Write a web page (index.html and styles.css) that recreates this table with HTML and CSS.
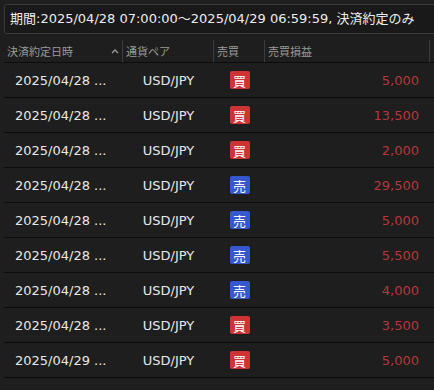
FILE: index.html
```html
<!DOCTYPE html>
<html lang="ja">
<head>
<meta charset="utf-8">
<link rel="stylesheet" href="styles.css">
</head>
<body>
<div class="page">
  <div class="filter">期間:2025/04/28 07:00:00～2025/04/29 06:59:59, 決済約定のみ</div>
  <div class="table">
    <div class="head">
      <div class="hcell">決済約定日時<svg class="sort" width="8" height="6" viewBox="0 0 8 6"><path d="M1 5 L4 2 L7 5" fill="none" stroke="#9a9a9a" stroke-width="1.3"/></svg></div>
      <div class="hcell">通貨ペア</div>
      <div class="hcell">売買</div>
      <div class="hcell">売買損益</div>
      <div class="hfill"></div>
    </div>
    <div class="row"><div class="c date">2025/04/28 ...</div><div class="c pair">USD/JPY</div><div class="c side"><span class="badge buy">買</span></div><div class="c pl">5,000</div></div>
    <div class="row"><div class="c date">2025/04/28 ...</div><div class="c pair">USD/JPY</div><div class="c side"><span class="badge buy">買</span></div><div class="c pl">13,500</div></div>
    <div class="row"><div class="c date">2025/04/28 ...</div><div class="c pair">USD/JPY</div><div class="c side"><span class="badge buy">買</span></div><div class="c pl">2,000</div></div>
    <div class="row"><div class="c date">2025/04/28 ...</div><div class="c pair">USD/JPY</div><div class="c side"><span class="badge sell">売</span></div><div class="c pl">29,500</div></div>
    <div class="row"><div class="c date">2025/04/28 ...</div><div class="c pair">USD/JPY</div><div class="c side"><span class="badge sell">売</span></div><div class="c pl">5,000</div></div>
    <div class="row"><div class="c date">2025/04/28 ...</div><div class="c pair">USD/JPY</div><div class="c side"><span class="badge sell">売</span></div><div class="c pl">5,500</div></div>
    <div class="row"><div class="c date">2025/04/28 ...</div><div class="c pair">USD/JPY</div><div class="c side"><span class="badge sell">売</span></div><div class="c pl">4,000</div></div>
    <div class="row"><div class="c date">2025/04/28 ...</div><div class="c pair">USD/JPY</div><div class="c side"><span class="badge buy">買</span></div><div class="c pl">3,500</div></div>
    <div class="row"><div class="c date">2025/04/29 ...</div><div class="c pair">USD/JPY</div><div class="c side"><span class="badge buy">買</span></div><div class="c pl">5,000</div></div>
  </div>
</div>
</body>
</html>
```
FILE: styles.css
```css
html, body {
  margin: 0;
  padding: 0;
  background: #1e1e1e;
  overflow: hidden;
}
body {
  font-family: "DejaVu Sans", "Noto Sans CJK JP", sans-serif;
  color: #e4e4e4;
  width: 434px;
  height: 390px;
}
.page {
  padding: 4px 0 0 4px;
  overflow: hidden;
}
.filter {
  box-sizing: border-box;
  width: 440px;
  height: 30px;
  border: 1px solid #3a3a3a;
  border-radius: 3px;
  background: #191919;
  font-size: 13px;
  line-height: 28px;
  padding-left: 5px;
  white-space: nowrap;
  color: #ececec;
}
.table {
  margin-top: 6px;
  width: 430px;
}
.head {
  display: grid;
  grid-template-columns: 119px 91px 51px 165px 4px;
  height: 22px;
  border-bottom: 1px solid #0c0c0c;
}
.hcell {
  border-right: 1px solid #3c3c3c;
  font-family: "Noto Sans CJK JP", sans-serif;
  font-size: 11px;
  color: #9a9a9a;
  padding-left: 3px;
  display: flex;
  align-items: center;
  line-height: 22px;
}
.sort {
  margin-left: auto;
  margin-right: 3px;
}
.row {
  display: grid;
  grid-template-columns: 119px 91px 51px 165px 4px;
  height: 34px;
  border-bottom: 1px solid #0c0c0c;
  align-items: center;
  font-size: 13px;
}
.c {
  white-space: nowrap;
  overflow: hidden;
}
.date {
  padding-left: 11px;
  color: #e8e8e8;
}
.pair {
  text-align: center;
  color: #e8e8e8;
}
.side {
  display: flex;
  justify-content: center;
}
.badge {
  display: inline-flex;
  align-items: center;
  justify-content: center;
  width: 20px;
  height: 18px;
  border-radius: 2px;
  font-family: "Noto Sans CJK JP", sans-serif;
  font-size: 13px;
  color: #ffffff;
}
.buy {
  background: #cf3434;
}
.sell {
  background: #3658cf;
}
.pl {
  text-align: right;
  padding-right: 11px;
  color: #b3383b;
}
```
